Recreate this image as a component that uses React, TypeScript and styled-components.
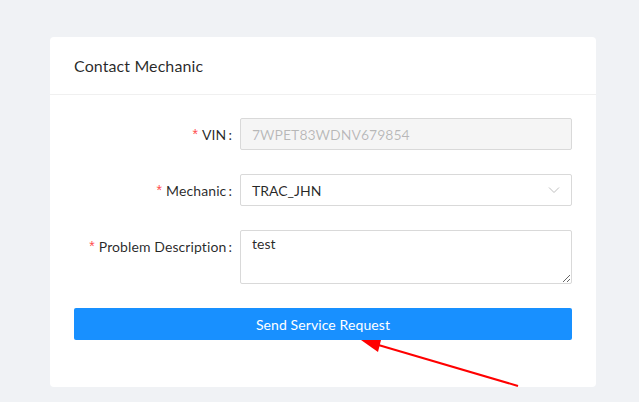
import React, { useState } from 'react';
import styled, { createGlobalStyle } from 'styled-components';

const GlobalStyle = createGlobalStyle`
  html, body { margin: 0; padding: 0; }
  body {
    background: #f0f2f5;
    font-family: Lato, "Noto Sans", sans-serif;
    font-size: 14px;
    color: rgba(0, 0, 0, 0.85);
  }
  * { box-sizing: border-box; }
`;

const Page = styled.div`
  position: relative;
  width: 639px;
  height: 402px;
  overflow: hidden;
  padding: 37px 43px 0 50px;
`;

const Card = styled.div`
  background: #ffffff;
  border-radius: 4px;
  height: 350px;
`;

const CardHeader = styled.div`
  height: 58px;
  padding: 0 24px;
  display: flex;
  align-items: center;
  border-bottom: 1px solid #f0f0f0;
  font-size: 16px;
  letter-spacing: 0.1px;
  color: rgba(0, 0, 0, 0.85);
`;

const Form = styled.form`
  padding: 23px 24px 24px;
  display: flex;
  flex-direction: column;
  gap: 24px;
`;

const Row = styled.div`
  display: grid;
  grid-template-columns: 166px 1fr;
  align-items: start;
`;

const Label = styled.label`
  height: 32px;
  display: flex;
  align-items: center;
  justify-content: flex-end;
  padding-right: 8px;
  white-space: nowrap;
  letter-spacing: 0.1px;
  &::before {
    content: '*';
    color: #ff4d4f;
    margin-right: 4px;
    font-family: SimSun, sans-serif;
  }
  &::after {
    content: ':';
    margin: 0 0 0 2px;
  }
`;

const Input = styled.input<{ $disabled?: boolean }>`
  height: 32px;
  width: 100%;
  padding: 4px 11px;
  border: 1px solid #d9d9d9;
  border-radius: 2px;
  font: inherit;
  color: ${p => (p.$disabled ? 'rgba(0,0,0,0.25)' : 'rgba(0,0,0,0.85)')};
  background: ${p => (p.$disabled ? '#f5f5f5' : '#fff')};
  outline: none;
`;

const SelectBox = styled.div`
  height: 32px;
  padding: 0 11px;
  border: 1px solid #d9d9d9;
  border-radius: 2px;
  display: flex;
  align-items: center;
  justify-content: space-between;
  color: rgba(0, 0, 0, 0.85);
  background: #fff;
`;

const TextArea = styled.textarea`
  height: 54px;
  width: 100%;
  padding: 4px 11px;
  border: 1px solid #d9d9d9;
  border-radius: 2px;
  font: inherit;
  color: rgba(0, 0, 0, 0.85);
  outline: none;
  resize: vertical;
  display: block;
`;

const SubmitButton = styled.button`
  height: 32px;
  width: 100%;
  border: none;
  border-radius: 2px;
  background: #1890ff;
  color: #fff;
  font: inherit;
  letter-spacing: 0.1px;
  cursor: pointer;
`;

const Annotation = styled.svg`
  position: absolute;
  left: 0;
  top: 0;
  pointer-events: none;
`;

const ChevronDown = () => (
  <svg width="12" height="12" viewBox="0 0 12 12" fill="none" stroke="#bfbfbf" strokeWidth="1">
    <polyline points="1 3.5 6 8.5 11 3.5" />
  </svg>
);

export default function App() {
  const [description, setDescription] = useState('test');

  return (
    <>
      <GlobalStyle />
      <Page>
        <Card>
          <CardHeader>Contact Mechanic</CardHeader>
          <Form onSubmit={e => e.preventDefault()}>
            <Row>
              <Label>VIN</Label>
              <Input $disabled disabled value="7WPET83WDNV679854" readOnly />
            </Row>
            <Row>
              <Label>Mechanic</Label>
              <SelectBox>
                <span>TRAC_JHN</span>
                <ChevronDown />
              </SelectBox>
            </Row>
            <Row>
              <Label>Problem Description</Label>
              <TextArea value={description} onChange={e => setDescription(e.target.value)} />
            </Row>
            <SubmitButton type="submit">Send Service Request</SubmitButton>
          </Form>
        </Card>
        <Annotation width="639" height="402" viewBox="0 0 639 402">
          <line x1="518" y1="386" x2="375" y2="344" stroke="#ff0000" strokeWidth="2" />
          <polygon points="361,340 381,340 378,352" fill="#ff0000" />
        </Annotation>
      </Page>
    </>
  );
}
